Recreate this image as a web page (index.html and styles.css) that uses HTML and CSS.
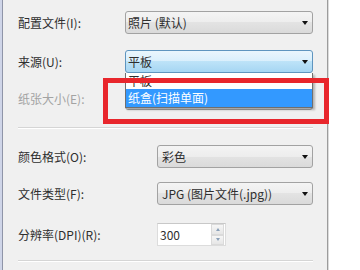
FILE: index.html
```html
<!DOCTYPE html>
<html lang="zh-CN">
<head>
<meta charset="utf-8">
<link rel="stylesheet" href="styles.css">
</head>
<body>
<div class="window">
  <div class="frame"></div>
  <div class="panel">
    <div class="row r1">
      <span class="label w1">配置文件(I):</span>
      <div class="combo c1"><span class="val">照片 (默认)</span><i class="arrow"></i></div>
    </div>
    <div class="row r2">
      <span class="label w1">来源(U):</span>
      <div class="combo c1 focus"><span class="val">平板</span><i class="arrow"></i></div>
    </div>
    <div class="row r3">
      <span class="label w1 disabled">纸张大小(E):</span>
      <div class="combo c1"><i class="arrow"></i></div>
    </div>
    <div class="sep s1"></div>
    <div class="row r4">
      <span class="label w2">颜色格式(O):</span>
      <div class="combo c2"><span class="val v2">彩色</span><i class="arrow"></i></div>
    </div>
    <div class="row r5">
      <span class="label w2">文件类型(F):</span>
      <div class="combo c2"><span class="val v2">JPG (图片文件(.jpg))</span><i class="arrow"></i></div>
    </div>
    <div class="row r6">
      <span class="label w2">分辨率(DPI)(R):</span>
      <div class="spin">
        <span class="num">300</span>
        <div class="btns">
          <div class="btn"><i class="up"></i></div>
          <div class="btn"><i class="down"></i></div>
        </div>
      </div>
    </div>
    <div class="sep s2"></div>
  </div>
  <div class="list">
    <div class="item i1">平板</div>
    <div class="item i2 sel">纸盒(扫描单面)</div>
  </div>
  <div class="redbox"></div>
</div>
</body>
</html>
```

FILE: styles.css
```css
html, body {
  margin: 0;
  padding: 0;
  background: #ffffff;
}
body {
  font-family: "Noto Sans CJK SC", "Microsoft YaHei", sans-serif;
  font-size: 12px;
  color: #2e2e2e;
}
.window {
  position: relative;
  width: 360px;
  height: 270px;
  display: flex;
  overflow: hidden;
}
.frame {
  width: 2px;
  background: #cfd5e8;
  border-right: 1px solid #8f95a8;
}
.panel {
  width: 325px;
  height: 270px;
  background: #f0f0f0;
  border-right: 1px solid #9c9c9c;
  box-shadow: 1px 0 0 #dcdcdc;
  padding: 11px 0 0 15px;
  box-sizing: border-box;
}
.row {
  display: flex;
  align-items: center;
  height: 23px;
}
.r2 { margin-top: 16px; }
.r3 { margin-top: 14px; }
.r4 { margin-top: 16px; }
.r5 { margin-top: 14px; }
.r6 { margin-top: 18px; }
.label {
  line-height: 23px;
  white-space: nowrap;
}
.w1 { width: 107px; }
.w2 { width: 139px; }
.disabled { color: #a3a3a3; }
.combo {
  height: 23px;
  box-sizing: border-box;
  border: 1px solid #a2a2a2;
  border-radius: 3px;
  background: linear-gradient(#f4f4f4, #ededed 50%, #e3e3e3 50%, #dadada);
  display: flex;
  align-items: center;
  justify-content: space-between;
  padding: 0 4px 0 2px;
}
.r3 .combo { justify-content: flex-end; }
.c1 { width: 188px; }
.c2 { width: 156px; }
.v2 { padding-left: 2px; }
.val {
  color: #2e2e2e;
  white-space: nowrap;
}
.focus {
  border-color: #5f95bf;
  background: linear-gradient(#eaf6fd, #d9effc 50%, #bde3f8 50%, #a6d6f3);
}
.arrow {
  width: 0;
  height: 0;
  border-left: 3.5px solid transparent;
  border-right: 3.5px solid transparent;
  border-top: 4px solid #111;
  margin-top: 1px;
}
.sep {
  width: 295px;
  height: 0;
  border-top: 1px solid #d5d5d5;
  border-bottom: 1px solid #ffffff;
}
.s1 { margin-top: 17px; }
.s2 { margin-top: 14px; }
.spin {
  width: 69px;
  height: 23px;
  box-sizing: border-box;
  border: 1px solid #dcdcdc;
  border-top-color: #c8c8c8;
  background: #ffffff;
  display: flex;
  align-items: center;
  justify-content: space-between;
  padding-left: 2px;
}
.num { color: #2e2e2e; }
.btns {
  width: 13px;
  height: 21px;
  display: flex;
  flex-direction: column;
  margin-right: 1px;
}
.btn {
  flex: 1;
  border: 1px solid #dadada;
  background: linear-gradient(#f6f6f6, #e6e6e6);
  display: flex;
  align-items: center;
  justify-content: center;
}
.up, .down {
  width: 0;
  height: 0;
  border-left: 2.5px solid transparent;
  border-right: 2.5px solid transparent;
}
.up { border-bottom: 3px solid #8aa0b8; }
.down { border-top: 3px solid #8aa0b8; }
.list {
  position: absolute;
  left: 125px;
  top: 73px;
  width: 188px;
  box-sizing: border-box;
  border: 1px solid #6f6f6f;
  border-top: none;
  background: #ffffff;
  box-shadow: 2px 2px 2px rgba(0, 0, 0, 0.25);
}
.item {
  padding-left: 2px;
  white-space: nowrap;
}
.i1 {
  height: 16px;
  line-height: 16px;
  color: #2e2e2e;
}
.i2 {
  height: 18px;
  line-height: 18px;
}
.sel {
  background: #3399ff;
  color: #ffffff;
}
.redbox {
  position: absolute;
  left: 103px;
  top: 78px;
  width: 226px;
  height: 46px;
  box-sizing: border-box;
  border: 5px solid #e8262c;
}
```
